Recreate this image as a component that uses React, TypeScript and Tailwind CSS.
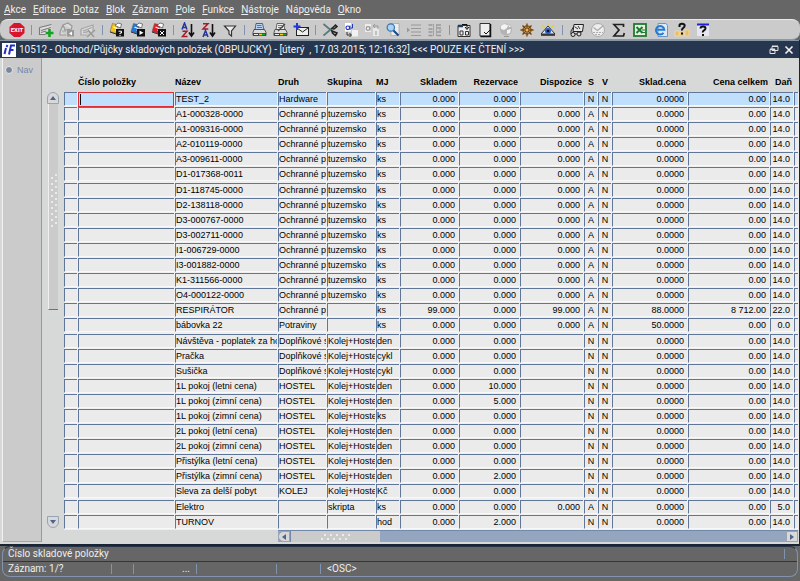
import type { ReactNode } from "react";

const menus: [string, string, string][] = [
  ["", "A", "kce"],
  ["", "E", "ditace"],
  ["", "D", "otaz"],
  ["", "B", "lok"],
  ["", "Z", "áznam"],
  ["", "P", "ole"],
  ["", "F", "unkce"],
  ["", "N", "ástroje"],
  ["Náp", "o", "věda"],
  ["", "O", "kno"],
];

const Card = ({ fill }: { fill: string }) => (
  <>
    <path d="M3.5 1.5 L1 9.5 L7 11.5 L9.5 3Z" fill={fill} stroke="#555" strokeWidth=".5" />
    <path d="M6 3.5 L9 1 L12.5 2 L11.5 6Z" fill="#fff" stroke="#333" strokeWidth=".6" />
    <path d="M4.5 5 L8 6.5 L7 9" stroke="#fff" strokeWidth="1.2" />
    <path d="M1 10 L7 12" stroke="#333" strokeWidth="1" />
    <rect x="7" y="7" width="8" height="7.5" fill="#111" />
  </>
);

const Printer = ({ dim }: { dim?: boolean }) => (
  <>
    <path d="M5 1.5h6.500l1.500 6.500h-9z" fill={dim ? "#eee" : "#b8d4f4"} stroke="#444" strokeWidth=".8" />
    <path d="M6 3.500h4.500M6 5.500h5" stroke="#557" strokeWidth=".8" />
    <path d="M3 7.500h10.500l1.500 3v3h-13v-3z" fill="#ddd" stroke="#333" strokeWidth=".8" />
    <path d="M2 11h13v3h-13z" fill="#444" />
    <path d="M3 12.500h4" stroke="#eee" />
    <path d="M8 12.500h3" stroke="#f3d218" strokeWidth="1.500" />
    <path d="M11 12.500h3" stroke="#27a32c" strokeWidth="1.500" />
  </>
);

const icons: Record<string, ReactNode> = {
  Exit: (
    <>
      <path d="M5 1h6l4.500 4v6l-4.500 4h-6l-4.500-4v-6z" fill="#d8142b" />
      <text x="8" y="10.300" fontSize="6" fontWeight="700" fill="#fff" textAnchor="middle">EXIT</text>
    </>
  ),
  "Nový záznam": (
    <>
      <path d="M1.500 5.500l12-3v5l-5 5h-7z" fill="#dedede" />
      <path d="M1.500 5.500l12-3M1.500 5.500v7h6M3 8.500l10-3M3 10.500l5-1.500" stroke="#7c7c7c" strokeWidth="1.200" />
      <path d="M11.500 7v8M7.500 11h8" stroke="#12a320" strokeWidth="2.600" />
    </>
  ),
  "Kopie záznamu": (
    <>
      <path d="M1 10l3-7 5-2 4 3-1 5M4 3l2 5 7-1M1 10v3h6M3 9h4" stroke="#999" strokeWidth="1.200" fill="#ddd" />
      <rect x="8" y="8" width="7" height="6.500" fill="#999" />
      <path d="M13 9.500v4l-3-2z" fill="#fff" />
    </>
  ),
  "Smazat záznam": (
    <>
      <path d="M1 7l12-4v7M1 7v6h6M3 9l9-3.500M3 11l5-1.500" stroke="#a5a5a5" strokeWidth="1.200" fill="#ddd" />
      <path d="M8 8l6 7M15 8l-8 7" stroke="#999" strokeWidth="1.500" />
    </>
  ),
  "Zadat dotaz": (
    <>
      <Card fill="#f3c51c" />
      <path d="M9.500 9.200h3v1.800h-1.500v1.200M11 13v1" stroke="#fff" strokeWidth="1" />
    </>
  ),
  "Provést dotaz": (
    <>
      <Card fill="#2377d8" />
      <path d="M9.500 8.500v4.500l4-2.200z" fill="#fff" />
    </>
  ),
  "Zrušit dotaz": (
    <>
      <Card fill="#dd1f2b" />
      <path d="M9 9l4 4M13 9l-4 4" stroke="#fff" strokeWidth="1" />
    </>
  ),
  "Řadit vzestupně": (
    <>
      <path d="M2 7.500l2.500-6.500 2.500 6.500M3 5.500h3" stroke="#26369c" strokeWidth="1.500" />
      <path d="M2.500 9.200h4.500l-4.500 5.300h5" stroke="#a51d2b" strokeWidth="1.500" />
      <path d="M11.500 2v11M9 10.500l2.500 3.500 2.500-3.500" stroke="#111" strokeWidth="1.600" />
    </>
  ),
  "Řadit sestupně": (
    <>
      <path d="M2 1.700h5l-5 5.300h5.300" stroke="#a51d2b" strokeWidth="1.500" />
      <path d="M2 15l2.500-6.500 2.500 6.500M3 13h3" stroke="#26369c" strokeWidth="1.500" />
      <path d="M11.500 2v11M9 10.500l2.500 3.500 2.500-3.500" stroke="#111" strokeWidth="1.600" />
    </>
  ),
  Filtr: <path d="M2.500 4h11l-4 5v5l-2.500-2v-3z" fill="#eee" stroke="#333" strokeWidth="1.200" />,
  Tisk: <Printer />,
  "Náhled tisku": (
    <>
      <Printer dim />
      <path d="M6 9l7-7" stroke="#444" strokeWidth="1.200" />
    </>
  ),
  Pošta: (
    <>
      <rect x="3.500" y="5.500" width="12" height="8" fill="#eee" stroke="#222" />
      <path d="M4 6l5.500 4 5.500-4" stroke="#222" />
      <path d="M4 1v7M.5 4.500h7" stroke="#2137d8" strokeWidth="2" />
    </>
  ),
  Vyjmout: (
    <>
      <path d="M1.500 2l9.500 8M1.500 13.500l9.500-8" stroke="#587b7c" strokeWidth="1.700" />
      <path d="M10 6.500l3.500-3.500 1.500 1.500-3 2.500zM10 9l5 2-1.500 2.500-3-2.500z" stroke="#222" strokeWidth="1.500" />
    </>
  ),
  Kopírovat: (
    <>
      <rect x="2" y="1" width="6" height="8.500" fill="#fff" />
      <circle cx="4.800" cy="5.800" r="1.800" stroke="#2137b8" strokeWidth="1.200" />
      <path d="M7 3.500v4.500M9.500 2v4h-2" stroke="#2137b8" />
      <rect x="9" y="8" width="6" height="6.500" fill="#f2f2f2" />
      <path d="M4 10v3h4M6.500 11l2 2-2 2" stroke="#333" />
    </>
  ),
  Vložit: (
    <>
      <rect x="1" y="2" width="6" height="8" fill="#ededed" />
      <circle cx="4" cy="6.500" r="1.800" stroke="#999" strokeWidth="1.200" />
      <path d="M6 4.500v4" stroke="#999" />
      <rect x="9" y="6" width="6" height="8" fill="#e8e8e8" />
      <path d="M9 4h5v3M11 2l-2 2 2 2M12 9v4" stroke="#999" />
    </>
  ),
  Hledat: (
    <>
      <path d="M6 1.500h8v12h-8z" fill="#eee" stroke="#999" strokeWidth=".6" />
      <circle cx="5.800" cy="5.500" r="3.700" fill="#a9d3f5" stroke="#3a74ac" strokeWidth="1.200" />
      <path d="M8.500 8.500l5 5" stroke="#1d4d8b" strokeWidth="2.200" />
    </>
  ),
  Seznam: (
    <>
      <path d="M5 3h10M5 6.500h10M5 10h10M5 13.500h10" stroke="#999" strokeWidth="1.200" />
      <path d="M1 5.500v5l3-2.500z" fill="#999" />
    </>
  ),
  Detail: (
    <>
      <path d="M1.500 3h4M1.500 7h4M1.500 10h4M1.500 13.500h4M10 3h4M10 6h4M10 10h4M10 13.500h4" stroke="#999" strokeWidth="1.500" />
      <path d="M6.500 2v12M9.500 2v12M12 8h3" stroke="#999" strokeWidth=".8" />
    </>
  ),
  Kalendář: (
    <>
      <path d="M2 3.500h12v11h-12z" fill="#eee" stroke="#333" />
      <path d="M2 4h5" stroke="#23395e" strokeWidth="2.500" />
      <path d="M6 2.500h5v4M9 5l2 2.500 2-2.500" stroke="#111" />
      <path d="M4 9h3v4h-3zM9.500 9.500h3v3.500h-3z" stroke="#333" />
    </>
  ),
  Dokument: (
    <>
      <path d="M3 1.500h10v12.500h-10z" fill="#eee" stroke="#333" />
      <path d="M13.500 2v12.500h-10" stroke="#111" strokeWidth="1.500" />
      <path d="M7 10l2 2 4-4" stroke="#111" />
    </>
  ),
  Web: (
    <>
      <circle cx="8" cy="7.500" r="6" fill="#b3b3b3" />
      <path d="M3 4l3-2 4 1-1 3-3 2-3-1zM9 8l4-1-1 4-3 1zM10 2l3 3h-2z" fill="#f4f4f4" />
      <path d="M6 14.500h5" stroke="#999" />
    </>
  ),
  Kormidlo: (
    <>
      <circle cx="8" cy="8" r="4" stroke="#9b5f13" strokeWidth="1.500" />
      <path d="M8 1.500v13M1.500 8h13M3.500 3.500l9 9M12.500 3.500l-9 9" stroke="#70420e" strokeWidth="1.300" />
      <circle cx="8" cy="8" r="1.500" fill="#edbd45" />
    </>
  ),
  Oko: (
    <>
      <path d="M2 3l3 3M8 1v3M14 3l-3 3" stroke="#e9d21c" strokeWidth="1.200" />
      <path d="M1 12l7-8 7 8z" fill="#dbe5f4" stroke="#333" />
      <circle cx="8" cy="9" r="3" fill="#255ed0" />
      <circle cx="8" cy="9" r="1.300" fill="#111" />
      <path d="M1 13h14" stroke="#222" strokeWidth="1.500" />
    </>
  ),
  Doprava: (
    <>
      <path d="M5 2.500h9.500l-1 7h-9.500z" fill="#e7e7e7" stroke="#222" />
      <path d="M5 4l-3 5v3h9l2-3M6 5l3 2M9 4l2 3" stroke="#333" />
      <circle cx="4" cy="12.500" r="2" fill="#ddd" stroke="#222" />
      <circle cx="10" cy="12" r="2" fill="#ddd" stroke="#222" />
    </>
  ),
  Schválit: (
    <>
      <circle cx="8" cy="8" r="6.500" fill="#eee" stroke="#aaa" />
      <path d="M3.500 5.500l4 3 6-5" stroke="#aaa" strokeWidth="1.200" />
      <path d="M3 10.500h10M5 12.500h6" stroke="#aaa" strokeDasharray="2 1" />
    </>
  ),
  Suma: <path d="M12.500 5v-2.500h-9.500l5 5.500-5 6h9.500l.8-3" stroke="#222" strokeWidth="1.700" />,
  Excel: (
    <>
      <rect x="2" y="2" width="12" height="12" fill="#e6f2e6" stroke="#217a2d" strokeWidth="1.800" />
      <path d="M4.500 5l6 6M10.500 5l-6 6" stroke="#217a2d" strokeWidth="2" />
      <path d="M10 8h3M10 10.500h3" stroke="#217a2d" />
    </>
  ),
  Internet: (
    <>
      <path d="M5 1.500h8l1.500 2v11h-9.500z" fill="#dce8f7" stroke="#6e93c7" />
      <path d="M10.500 10.800a4.200 4.200 0 1 1 .8-3h-7" stroke="#237bd0" strokeWidth="2" />
    </>
  ),
  "Nápověda k poli": (
    <>
      <path d="M1 9h4v5h-4zM6 10h4v4h-4zM11 8h4v6h-4z" fill="#edbd66" stroke="#f7df9f" strokeWidth=".7" />
      <path d="M5.500 5v-1.500q0-1.700 2.500-1.700t2.700 1.700q0 1.500-1.500 2.500t-1.200 2.500M8 10.500v2" stroke="#111" strokeWidth="2" />
    </>
  ),
  Nápověda: (
    <>
      <path d="M2 2h12v12h-12z" fill="#e6e6f0" />
      <path d="M2 2.500h12" stroke="#2020dc" strokeWidth="2" />
      <path d="M5.500 6.500q0-2 2.500-2t2.500 1.700q0 1.300-1.500 2.200t-1.200 2M8 12v2" stroke="#111" strokeWidth="2" />
    </>
  ),
};

const groups: string[][] = [
  ["Exit"],
  ["Nový záznam", "Kopie záznamu", "Smazat záznam"],
  ["Zadat dotaz", "Provést dotaz", "Zrušit dotaz"],
  ["Řadit vzestupně", "Řadit sestupně", "Filtr"],
  ["Tisk", "Náhled tisku", "Pošta"],
  ["Vyjmout", "Kopírovat", "Vložit", "Hledat", "Seznam", "Detail"],
  ["Kalendář", "Dokument", "Web", "Kormidlo", "Oko"],
  ["Doprava", "Schválit", "Suma", "Excel", "Internet", "Nápověda k poli", "Nápověda"],
];

type Column = { label: string; width: string; align?: "right" | "center" };

const columns: Column[] = [
  { label: "", width: "w-[14px]" },
  { label: "Číslo položky", width: "w-[97px]" },
  { label: "Název", width: "" },
  { label: "Druh", width: "w-[49px]" },
  { label: "Skupina", width: "w-[49px]" },
  { label: "MJ", width: "w-[24px]" },
  { label: "Skladem", width: "w-[59px]", align: "right" },
  { label: "Rezervace", width: "w-[61px]", align: "right" },
  { label: "Dispozice", width: "w-[64px]", align: "right" },
  { label: "S", width: "w-[14px]", align: "center" },
  { label: "V", width: "w-[14px]", align: "center" },
  { label: "Sklad.cena", width: "w-[76px]", align: "right" },
  { label: "Cena celkem", width: "w-[82px]", align: "right" },
  { label: "Daň", width: "w-[24px]", align: "right" },
  { label: "", width: "w-[5px]" },
];

const headAlign = { left: "text-left", right: "pr-0.5 text-right", center: "text-center" };
const cellAlign = { left: "", right: "pr-[3px] text-right", center: "text-center" };

// Název | Druh | Skupina | MJ | Skladem | Rezervace | Dispozice | S | Sklad.cena | Cena celkem | Daň
const item = (name: string) => `${name}|Ochranné p|tuzemsko|ks|0.000|0.000|0.000|A|0.0000|0.00|14.0`;
const service = (name: string, kind: string, unit: string, reserved = "0.000") =>
  `${name}|${kind}|Kolej+Hoste|${unit}|0.000|${reserved}||N|0.0000|0.00|14.0`;

const rows = [
  "TEST_2|Hardware||ks|0.000|0.000||N|0.0000|0.00|14.0",
  ...[
    "A1-000328-0000", "A1-009316-0000", "A2-010119-0000", "A3-009611-0000",
    "D1-017368-0011", "D1-118745-0000", "D2-138118-0000", "D3-000767-0000",
    "D3-002711-0000", "I1-006729-0000", "I3-001882-0000", "K1-311566-0000",
    "O4-000122-0000",
  ].map(item),
  "RESPIRÁTOR|Ochranné p||ks|99.000|0.000|99.000|A|88.0000|8 712.00|22.0",
  "bábovka 22|Potraviny||ks|0.000|0.000|0.000|A|50.0000|0.00|0.0",
  service("Návštěva - poplatek za ho", "Doplňkové s", "den"),
  service("Pračka", "Doplňkové s", "cykl"),
  service("Sušička", "Doplňkové s", "cykl"),
  service("1L pokoj (letni cena)", "HOSTEL", "den", "10.000"),
  service("1L pokoj (zimní cena)", "HOSTEL", "den", "5.000"),
  service("1L pokoj (zimní cena)", "HOSTEL", "ks"),
  service("2L pokoj (letní cena)", "HOSTEL", "den"),
  service("2L pokoj (zimní cena)", "HOSTEL", "den"),
  service("Přistýlka (letní cena)", "HOSTEL", "den"),
  service("Přistýlka (zimní cena)", "HOSTEL", "den", "2.000"),
  service("Sleva za delší pobyt", "KOLEJ", "Kč"),
  "Elektro||skripta|ks|0.000|0.000|0.000|A|0.0000|0.00|5.0",
  "TURNOV|||hod|0.000|2.000||N|0.0000|0.00|14.0",
].map((line) => {
  const f = line.split("|");
  return ["", "", ...f.slice(0, 8), "N", ...f.slice(8), ""];
});

const Divider = () => <span className="h-2.5 w-px bg-[#7f93b3]" />;

function Toolbar() {
  return (
    <div className="flex h-[21px] shrink-0 items-center rounded-lg border-t border-b border-t-[#e8e8e8] border-b-[#8e9aa3] bg-[#cbcbcb] pl-1.5" role="toolbar">
      {groups.map((group, i) => (
        <div key={group[0]} className="flex items-center">
          {i > 0 && (
            <span className="flex w-2 justify-center">
              <Divider />
            </span>
          )}
          {group.map((name) => (
            <button key={name} type="button" aria-label={name} className="flex w-[21px] justify-center">
              <svg viewBox="0 0 16 16" className="size-4" fill="none">
                {icons[name]}
              </svg>
            </button>
          ))}
        </div>
      ))}
    </div>
  );
}

function Arrow({ d, label, shape }: { d: string; label: string; shape: string }) {
  return (
    <button type="button" aria-label={label} className={`flex items-center justify-center border border-[#9aa3b0] bg-[#d8d8d8] ${shape}`}>
      <svg viewBox="0 0 8 8" className="size-2">
        <path d={d} fill="#4c658f" />
      </svg>
    </button>
  );
}

function Dots({ vertical }: { vertical?: boolean }) {
  const count = vertical ? 18 : 10;
  return (
    <svg className={vertical ? "h-14 w-2" : "h-2 w-8"} fill="#f6f6f6">
      {Array.from({ length: count }, (_, i) => {
        const a = 2 + i * 3;
        const b = i % 2 ? 2 : 6;
        return <circle key={i} cx={vertical ? b : a} cy={vertical ? a : b} r="1" />;
      })}
    </svg>
  );
}

const bevel = "border-t border-b border-l border-t-[#5f7699] border-b-[#f8f8f8] border-l-[#5f7699]";

function Grid() {
  return (
    <table className="h-full w-full table-fixed border-separate border-spacing-0 text-[9px] leading-3 text-black">
      <colgroup>
        {columns.map((column, i) => (
          <col key={i} className={column.width} />
        ))}
      </colgroup>
      <thead>
        <tr className="h-[34px]">
          {columns.map((column, i) => (
            <th key={i} scope="col" className={`p-0 pt-[18px] align-top font-bold whitespace-nowrap ${headAlign[column.align ?? "left"]}`}>
              {column.label}
            </th>
          ))}
        </tr>
      </thead>
      <tbody>
        {rows.map((row, r) => (
          <tr key={r}>
            {row.map((text, i) => (
              <td key={i} className="bg-[#efefef] p-0 pr-px align-top">
                {i === 1 ? (
                  <input
                    aria-label={`Číslo položky ${r + 1}`}
                    className={
                      r === 0
                        ? "-mb-px block h-[15px] w-full border border-[#e02d35] bg-[#bfdffc] bg-[linear-gradient(#111,#111)] bg-[length:1px_11px] bg-[position:1px_center] bg-no-repeat outline-none"
                        : `block h-3.5 w-full bg-[#ebebeb] outline-none ${bevel}`
                    }
                  />
                ) : (
                  <div
                    className={`h-3.5 overflow-hidden whitespace-nowrap ${bevel} ${r === 0 ? "bg-[#bfdffc]" : "bg-[#ebebeb]"} ${cellAlign[columns[i].align ?? "left"]}`}
                  >
                    {text}
                  </div>
                )}
              </td>
            ))}
          </tr>
        ))}
      </tbody>
    </table>
  );
}

export default function App() {
  return (
    <div className="flex h-screen flex-col overflow-hidden bg-[#666] font-[Roboto,'Liberation_Sans',Arial,sans-serif] text-[10px] leading-3">
      <nav className="flex h-[19px] shrink-0 items-center gap-[7px] pl-1 text-[#eee]">
        {menus.map(([before, key, after]) => (
          <button key={before + key + after} type="button">
            {before}
            <span className="underline">{key}</span>
            {after}
          </button>
        ))}
      </nav>
      <Toolbar />
      <main className="flex min-h-0 flex-1 flex-col border-r border-b-2 border-[#1b2433] bg-[#d6d9d8]">
        <header className="flex h-[18px] shrink-0 items-center gap-[3px] border-t border-t-[#8796a5] bg-[#27364f] pr-1 pl-0.5 text-[#eef0f4]">
          <svg viewBox="0 0 14 14" className="size-3.5" fill="none">
            <rect width="14" height="14" fill="#fff" />
            <path d="M4 5l-1.500 6M5.500 2l-1 2M7 11.500l2-9h4M8 7h3.500" stroke="#1f2dc4" strokeWidth="2" />
          </svg>
          <h1 className="flex-1 whitespace-pre">10512 - Obchod/Půjčky skladových položek (OBPUJCKY) - [úterý  , 17.03.2015; 12:16:32] {"<<<"} POUZE KE ČTENÍ {">>>"}</h1>
          <button type="button" aria-label="Obnovit">
            <svg viewBox="0 0 12 12" className="size-3" fill="none" stroke="#e4e4e4">
              <path d="M4 2.500h6v4h-6zM4 2h6M2 5.500h5v4h-5zM2 5h5" />
            </svg>
          </button>
          <button type="button" aria-label="Zavřít">
            <svg viewBox="0 0 12 12" className="size-3" fill="none" stroke="#f3f3f3" strokeWidth="1.600">
              <path d="M2.500 2.500l7 7M9.500 2.500l-7 7" />
            </svg>
          </button>
        </header>
        <div className="flex min-h-0 flex-1 font-['Liberation_Sans',Arial,sans-serif]">
          <aside className="mb-0.5 ml-0.5 w-10 shrink-0 border-r border-b border-l border-r-[#8b9bb4] border-b-[#9ba8bb] border-l-[#f2f2f2] bg-[#cbcbcb] pt-1.5">
            <label className="flex items-center gap-1 pl-0.5 text-[9px] text-[#7688a5]">
              <input type="radio" name="nav" className="size-2 appearance-none rounded-full border border-[#e8e8e8] bg-[#7a8699]" />
              Nav
            </label>
          </aside>
          <div className="flex w-[22px] shrink-0 flex-col items-center pt-[34px] pb-4">
            <Arrow label="Nahoru" d="M4 2l3 4h-6z" shape="h-3 w-3 rounded-t-md" />
            <div className="min-h-0 w-2.5 flex-1">
              <div className="flex h-1/2 items-center justify-center border-b border-l border-b-[#5f7699] border-l-[#efefef] bg-[#cbcbcb] pb-3">
                <Dots vertical />
              </div>
            </div>
            <Arrow label="Dolů" d="M4 6l3-4h-6z" shape="h-3 w-3 rounded-b-md" />
          </div>
          <div className="flex min-w-0 flex-1 flex-col">
            <div className="min-h-0 flex-1">
              <Grid />
            </div>
            <div className="mr-px mb-0.5 ml-[214px] flex h-3 shrink-0 border-t border-t-[#7389aa] bg-[#94a5c0]">
              <Arrow label="Vlevo" d="M2 4l4-3v6z" shape="w-3 rounded-l-md" />
              <div className="flex w-[90px] items-center justify-center border-l border-[#7389aa] bg-[#cbcbcb]">
                <Dots />
              </div>
              <span className="flex-1" />
              <Arrow label="Vpravo" d="M6 4l-4-3v6z" shape="w-3" />
            </div>
          </div>
        </div>
      </main>
      <footer className="mr-0.5 mb-1 ml-0.5 shrink-0 rounded-lg border border-[#8293ae] border-t-[#26344a] text-[#eee]">
        <div className="flex h-[15px] items-center border-b border-[#28374c] pr-3 pl-[5px]">
          <span className="flex-1">Číslo skladové položky</span>
          <Divider />
        </div>
        <div className="flex h-3.5 items-center pl-[5px]">
          <span className="w-[103px]">Záznam: 1/?</span>
          <Divider />
          <span className="w-[21px]" />
          <Divider />
          <span className="w-[62px] pr-1.5 text-right">...</span>
          <Divider />
          <span className="w-[79px]" />
          <Divider />
          <span className="w-[43px]" />
          <Divider />
          <span className="pl-1.5">{"<OSC>"}</span>
        </div>
      </footer>
    </div>
  );
}
